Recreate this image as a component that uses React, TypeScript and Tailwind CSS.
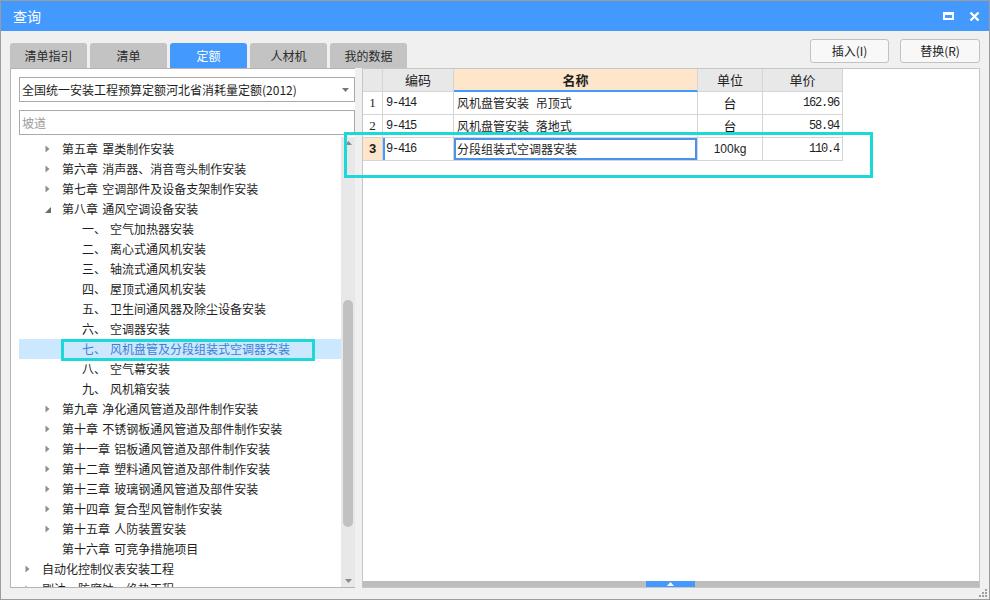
import clsx from 'clsx';

type TreeRow = {
  level: number;
  label: string;
  prefix?: string;
  arrow?: 'closed' | 'open';
  selected?: boolean;
};

const tree: TreeRow[] = [
  { level: 1, arrow: 'closed', label: '第五章 罩类制作安装' },
  { level: 1, arrow: 'closed', label: '第六章 消声器、消音弯头制作安装' },
  { level: 1, arrow: 'closed', label: '第七章 空调部件及设备支架制作安装' },
  { level: 1, arrow: 'open', label: '第八章 通风空调设备安装' },
  { level: 2, prefix: '一、', label: '空气加热器安装' },
  { level: 2, prefix: '二、', label: '离心式通风机安装' },
  { level: 2, prefix: '三、', label: '轴流式通风机安装' },
  { level: 2, prefix: '四、', label: '屋顶式通风机安装' },
  { level: 2, prefix: '五、', label: '卫生间通风器及除尘设备安装' },
  { level: 2, prefix: '六、', label: '空调器安装' },
  { level: 2, prefix: '七、', label: '风机盘管及分段组装式空调器安装', selected: true },
  { level: 2, prefix: '八、', label: '空气幕安装' },
  { level: 2, prefix: '九、', label: '风机箱安装' },
  { level: 1, arrow: 'closed', label: '第九章 净化通风管道及部件制作安装' },
  { level: 1, arrow: 'closed', label: '第十章 不锈钢板通风管道及部件制作安装' },
  { level: 1, arrow: 'closed', label: '第十一章 铝板通风管道及部件制作安装' },
  { level: 1, arrow: 'closed', label: '第十二章 塑料通风管道及部件制作安装' },
  { level: 1, arrow: 'closed', label: '第十三章 玻璃钢通风管道及部件安装' },
  { level: 1, arrow: 'closed', label: '第十四章 复合型风管制作安装' },
  { level: 1, arrow: 'closed', label: '第十五章 人防装置安装' },
  { level: 1, label: '第十六章 可竞争措施项目' },
  { level: 0, arrow: 'closed', label: '自动化控制仪表安装工程' },
  { level: 0, arrow: 'closed', label: '刷油、防腐蚀、绝热工程' },
];

const indents = ['w-0', 'w-[20px]', 'w-[40px]'];

const tabs = ['清单指引', '清单', '定额', '人材机', '我的数据'];

const rows = [
  { no: '1', code: '9-414', name: '风机盘管安装 吊顶式', unit: '台', price: '162.96' },
  { no: '2', code: '9-415', name: '风机盘管安装 落地式', unit: '台', price: '58.94' },
  { no: '3', code: '9-416', name: '分段组装式空调器安装', unit: '100kg', price: '110.4' },
];

const mono = "font-['Liberation_Mono',monospace] tracking-[-1.2px]";
const cell = 'flex h-[23px] items-center border-r border-b border-[#d5d5d5]';

const ClosedArrow = () => (
  <svg width="5" height="8" viewBox="0 0 5 8">
    <path d="M0.5 0.5 L4.5 4 L0.5 7.5 Z" fill="#8e8e8e" />
  </svg>
);

const OpenArrow = () => (
  <svg width="6" height="6" viewBox="0 0 6 6">
    <path d="M6 0 V6 H0 Z" fill="#6a6a6a" />
  </svg>
);

const App = () => {
  return (
    <div className="relative flex h-[600px] w-[990px] flex-col overflow-hidden border border-[#9c9c9c] bg-[#f0f0f0] font-['Noto_Sans_CJK_SC','Microsoft_YaHei',sans-serif] text-[12px] text-[#1e1e1e]">
      {/* title bar */}
      <div className="flex h-[30px] shrink-0 items-center justify-between bg-[#4499fe] pl-[12px] pr-[9px] text-white">
        <span className="text-[14px]">查询</span>
        <div className="flex items-center gap-[15px]">
          <div className="h-[8px] w-[11px] border-x-2 border-t-[3px] border-b-2 border-white" />
          <svg width="11" height="11" viewBox="0 0 11 11">
            <path d="M1.5 1.5 L9.5 9.5 M9.5 1.5 L1.5 9.5" stroke="white" strokeWidth="2.4" />
          </svg>
        </div>
      </div>

      {/* body */}
      <div className="flex flex-1 flex-col px-[9px]">
        <div className="flex h-[37px] shrink-0 justify-between">
          <div className="flex items-end gap-[3px]">
            {tabs.map((tab) => (
              <div
                key={tab}
                className={clsx(
                  'flex h-[25px] w-[77px] items-center justify-center rounded-t-[3px] text-[12px]',
                  tab === '定额' ? 'bg-[#4499fe] text-white' : 'bg-[#c3c3c3] text-[#2a2a2a]'
                )}
              >
                {tab}
              </div>
            ))}
          </div>
          <div className="mt-[8px] flex gap-[11px] self-start">
            <button
              type="button"
              className="flex h-[24px] w-[79px] items-center justify-center rounded-[3px] border border-[#c2c2c2] bg-[#f8f8f8] text-[12px] text-[#222]"
            >
              插入(I)
            </button>
            <button
              type="button"
              className="flex h-[24px] w-[80px] items-center justify-center rounded-[3px] border border-[#c2c2c2] bg-[#f8f8f8] text-[12px] text-[#222]"
            >
              替换(R)
            </button>
          </div>
        </div>

        <div className="flex h-[520px] gap-[7px]">
          {/* left panel */}
          <div className="flex w-[345px] flex-col border-y border-l border-[#b4b4b4] bg-white">
            <div className="flex flex-col gap-[8px] pl-[8px] pt-[8px]">
              <div className="flex h-[25px] items-center justify-between border border-[#aaaaaa] pl-[2px] pr-[5px]">
                <span>全国统一安装工程预算定额河北省消耗量定额(2012)</span>
                <svg width="7" height="4" viewBox="0 0 7 4">
                  <path d="M0 0 H7 L3.5 4 Z" fill="#777" />
                </svg>
              </div>
              <div className="flex h-[25px] items-center border border-[#aaaaaa] pl-[2px] text-[#9a9a9a]">坡道</div>
            </div>
            <div className="mt-[2px] flex min-h-0 flex-1 overflow-hidden pl-[8px]">
              <div className="flex-1 pt-[2px]">
                {tree.map((row) => (
                  <div
                    key={row.label}
                    className={clsx(
                      'flex h-[20px] items-center whitespace-nowrap [word-spacing:1.5px]',
                      row.selected && 'bg-[#cce8ff] text-[#3d7fd4]'
                    )}
                  >
                    <div className={clsx('shrink-0', indents[row.level])} />
                    <div
                      className={clsx(
                        'flex w-[23px] shrink-0 items-center',
                        row.arrow === 'open' ? 'pl-[6px] pt-[2px]' : 'pl-[6px]'
                      )}
                    >
                      {row.arrow === 'closed' && <ClosedArrow />}
                      {row.arrow === 'open' && <OpenArrow />}
                    </div>
                    {row.prefix && <span className="inline-block w-[28px]">{row.prefix}</span>}
                    <span>{row.label}</span>
                  </div>
                ))}
              </div>
              {/* vertical scrollbar */}
              <div className="flex w-[14px] shrink-0 flex-col items-center bg-[#e8e8e8]">
                <svg className="mt-[4px]" width="7" height="4" viewBox="0 0 7 4">
                  <path d="M0 4 H7 L3.5 0 Z" fill="#8a8a8a" />
                </svg>
                <div className="mt-[155px] h-[227px] w-[10px] rounded-full bg-[#c1c1c1]" />
                <div className="flex-1" />
                <svg className="mb-[4px]" width="7" height="4" viewBox="0 0 7 4">
                  <path d="M0 0 H7 L3.5 4 Z" fill="#8a8a8a" />
                </svg>
              </div>
            </div>
          </div>

          {/* right panel */}
          <div className="flex flex-1 flex-col border border-[#c6c6c6] bg-white">
            <div className="flex-1">
              <div className="grid grid-cols-[20px_71px_244px_65px_80px]">
                <div className={clsx(cell, 'bg-[#e8e8e8]')} />
                <div className={clsx(cell, 'justify-center bg-[#e8e8e8] text-[13px]')}>编码</div>
                <div className="flex h-[23px] items-center justify-center border-r border-b-2 border-r-[#d5d5d5] border-b-[#4499fe] bg-[#fde6c9] text-[13px] font-bold">
                  名称
                </div>
                <div className={clsx(cell, 'justify-center bg-[#e8e8e8] text-[13px]')}>单位</div>
                <div className={clsx(cell, 'justify-center bg-[#e8e8e8] text-[13px]')}>单价</div>

                {rows.map((row) => {
                  const active = row.no === '3';
                  return [
                    <div
                      key={`${row.no}-n`}
                      className={clsx(
                        cell,
                        'justify-center',
                        active ? "bg-[#fde6c9] font-['Liberation_Sans',sans-serif] text-[13px] font-bold" : "font-['Liberation_Serif',serif] text-[13px]"
                      )}
                    >
                      {row.no}
                    </div>,
                    <div
                      key={`${row.no}-c`}
                      className={clsx(cell, mono, 'pl-[3px]', active && 'shadow-[inset_2px_0_0_#4499fe]')}
                    >
                      {row.code}
                    </div>,
                    <div
                      key={`${row.no}-m`}
                      className={clsx(cell, 'pl-[3px] text-[12px] [word-spacing:4px]', active && 'shadow-[inset_0_0_0_2px_#4a92ec]')}
                    >
                      {row.name}
                    </div>,
                    <div
                      key={`${row.no}-u`}
                      className={clsx(cell, 'justify-center', active ? "font-['Liberation_Sans',sans-serif]" : 'text-[13px]')}
                    >
                      {row.unit}
                    </div>,
                    <div key={`${row.no}-p`} className={clsx(cell, mono, 'justify-end pr-[3px]')}>
                      {row.price}
                    </div>,
                  ];
                })}
              </div>
            </div>
            {/* horizontal scrollbar */}
            <div className="flex h-[6px] bg-[#bdbdbd]">
              <div className="ml-[283px] flex w-[49px] items-center justify-center bg-[#4499fe]">
                <svg width="7" height="4" viewBox="0 0 7 4">
                  <path d="M0 4 H7 L3.5 0 Z" fill="white" />
                </svg>
              </div>
            </div>
          </div>
        </div>
      </div>

      {/* resize grip */}
      <div className="absolute bottom-[2px] right-[2px] grid grid-cols-3 gap-[1px]">
        <span className="h-[2px] w-[2px]" />
        <span className="h-[2px] w-[2px]" />
        <span className="h-[2px] w-[2px] bg-[#a0a0a0]" />
        <span className="h-[2px] w-[2px]" />
        <span className="h-[2px] w-[2px] bg-[#a0a0a0]" />
        <span className="h-[2px] w-[2px] bg-[#a0a0a0]" />
        <span className="h-[2px] w-[2px] bg-[#a0a0a0]" />
        <span className="h-[2px] w-[2px] bg-[#a0a0a0]" />
        <span className="h-[2px] w-[2px] bg-[#a0a0a0]" />
      </div>

      {/* annotation highlights */}
      <div className="pointer-events-none absolute left-[60px] top-[338px] h-[22px] w-[254px] border-[3px] border-[#1dd8d8]" />
      <div className="pointer-events-none absolute left-[343px] top-[131px] h-[46px] w-[529px] border-[3px] border-[#1dd8d8]" />
    </div>
  );
};

export default App;
